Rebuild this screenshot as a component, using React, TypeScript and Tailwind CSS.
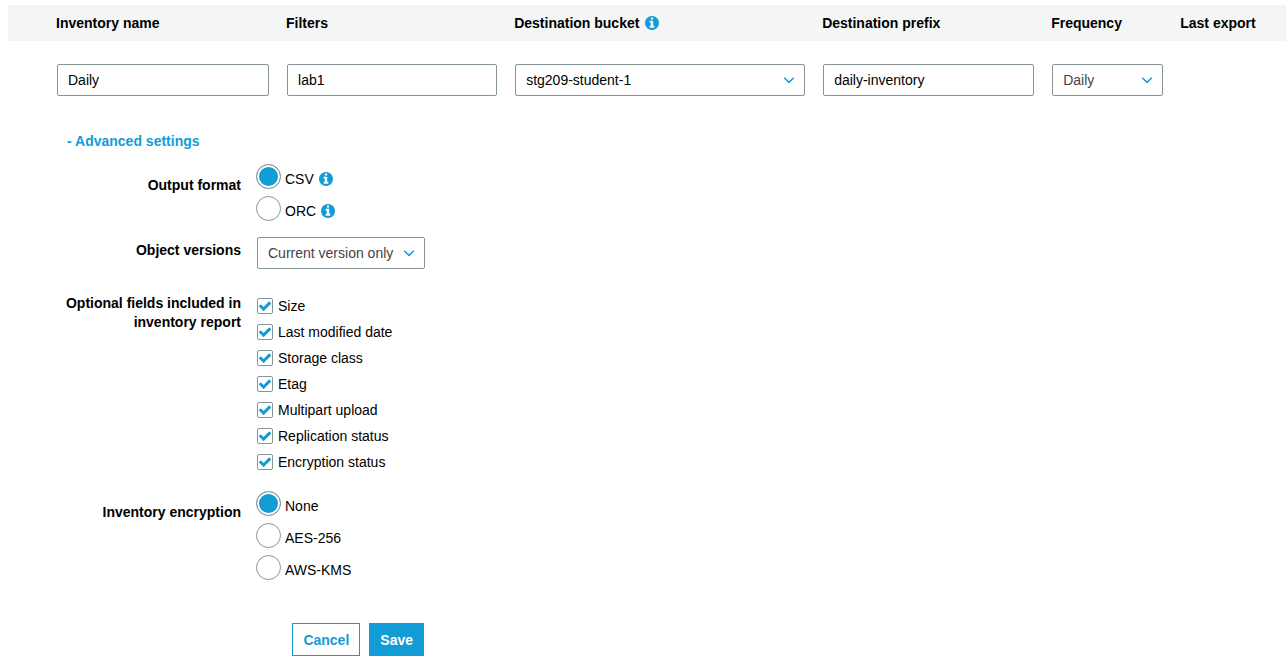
import { useState } from 'react';
import type { ReactNode, SelectHTMLAttributes } from 'react';

function InfoIcon({ label }: { label: string }) {
  return (
    <svg
      role="img"
      aria-label={label}
      viewBox="128 128 1536 1536"
      fill="currentColor"
      className="size-[14px] shrink-0 text-[#129cd6]"
    >
      <path d="M1152 1376v-160q0-14-9-23t-23-9h-96v-512q0-14-9-23t-23-9h-320q-14 0-23 9t-9 23v160q0 14 9 23t23 9h96v320h-96q-14 0-23 9t-9 23v160q0 14 9 23t23 9h448q14 0 23-9t9-23zm-128-896v-160q0-14-9-23t-23-9h-192q-14 0-23 9t-9 23v160q0 14 9 23t23 9h192q14 0 23-9t9-23zm640 416q0 209-103 385.5t-279.5 279.5-385.5 103-385.5-103-279.5-279.5-103-385.5 103-385.5 279.5-279.5 385.5-103 385.5 103 279.5 279.5 103 385.5z" />
    </svg>
  );
}

function TextField({ label, value }: { label: string; value: string }) {
  return (
    <input
      type="text"
      aria-label={label}
      defaultValue={value}
      className="block h-8 w-full rounded-xs border border-[#879596] bg-white px-[10px] text-sm text-black"
    />
  );
}

function SelectField({ children, className = '', ...rest }: SelectHTMLAttributes<HTMLSelectElement>) {
  return (
    <div className="relative">
      <select
        {...rest}
        className={`block h-8 w-full appearance-none rounded-xs border border-[#879596] bg-white pr-7 pl-[10px] text-sm ${className}`}
      >
        {children}
      </select>
      <svg
        viewBox="0 0 12 8"
        className="pointer-events-none absolute top-3 right-[10px] h-2 w-3"
        fill="none"
        stroke="#129cd6"
        strokeWidth="1.5"
        aria-hidden="true"
      >
        <path d="M1.2 1.8 L6 6.4 L10.8 1.8" />
      </svg>
    </div>
  );
}

interface Option {
  label: string;
  info?: string;
}

function RadioGroup({ name, labelId, options }: { name: string; labelId: string; options: Option[] }) {
  return (
    <div role="radiogroup" aria-labelledby={labelId}>
      {options.map((option, index) => (
        <div key={option.label} className="flex h-8 items-start gap-[5px]">
          <label className="flex items-end gap-1 leading-5">
            <input
              type="radio"
              name={name}
              defaultChecked={index === 0}
              className="size-[25px] shrink-0 appearance-none rounded-full border border-[#879596] bg-white checked:bg-[#129cd6] checked:shadow-[inset_0_0_0_2px_white]"
            />
            {option.label}
          </label>
          {option.info && (
            <span className="flex h-[25px] items-end pb-[3px]">
              <InfoIcon label={option.info} />
            </span>
          )}
        </div>
      ))}
    </div>
  );
}

function CheckRow({ label }: { label: string }) {
  return (
    <label className="flex h-[26px] items-center gap-[5px]">
      <span className="relative flex size-4 items-center justify-center">
        <input
          type="checkbox"
          defaultChecked
          className="peer size-4 appearance-none rounded-xs border border-[#879596] bg-white"
        />
        <svg
          viewBox="0 0 1792 1792"
          fill="currentColor"
          aria-hidden="true"
          className="pointer-events-none absolute inset-0 m-auto hidden size-[14px] text-[#129cd6] peer-checked:block"
        >
          <path d="M1671 566q0 40-28 68l-724 724-136 136q-28 28-68 28t-68-28l-136-136-362-362q-28-28-28-68t28-68l136-136q28-28 68-28t68 28l294 295 656-657q28-28 68-28t68 28l136 136q28 28 28 68z" />
        </svg>
      </span>
      {label}
    </label>
  );
}

function FieldRow({ label, children }: { label: ReactNode; children: ReactNode }) {
  return (
    <div className="grid grid-cols-[241px_1fr] gap-x-[15px]">
      <div className="pl-14 text-right leading-[19px] font-bold">{label}</div>
      <div>{children}</div>
    </div>
  );
}

const optionalFields = [
  'Size',
  'Last modified date',
  'Storage class',
  'Etag',
  'Multipart upload',
  'Replication status',
  'Encryption status',
];

export default function App() {
  const [open, setOpen] = useState(true);

  return (
    <form
      className="bg-white pt-[5px] font-['Liberation_Sans',Arial,sans-serif] text-sm text-black"
      onSubmit={(event) => event.preventDefault()}
    >
      <div className="pl-2">
        <table className="w-full table-fixed text-left">
          <colgroup>
            <col className="w-12" />
            <col className="w-[18%]" />
            <col className="w-[17.85%]" />
            <col className="w-[24.1%]" />
            <col className="w-[17.92%]" />
            <col className="w-[10.1%]" />
            <col />
          </colgroup>
          <thead>
            <tr className="h-9 bg-[#f4f6f6]">
              <td />
              <th scope="col">Inventory name</th>
              <th scope="col">Filters</th>
              <th scope="col">
                <span className="flex items-center gap-[6px]">
                  Destination bucket <InfoIcon label="About the destination bucket" />
                </span>
              </th>
              <th scope="col">Destination prefix</th>
              <th scope="col">Frequency</th>
              <th scope="col">Last export</th>
            </tr>
          </thead>
          <tbody>
            <tr>
              <td />
              <td className="pt-[23px] pr-[17px] pl-px">
                <TextField label="Inventory name" value="Daily" />
              </td>
              <td className="pt-[23px] pr-[17px] pl-px">
                <TextField label="Filters" value="lab1" />
              </td>
              <td className="pt-[23px] pr-[17px] pl-px">
                <SelectField aria-label="Destination bucket">
                  <option>stg209-student-1</option>
                </SelectField>
              </td>
              <td className="pt-[23px] pr-[17px] pl-px">
                <TextField label="Destination prefix" value="daily-inventory" />
              </td>
              <td className="pt-[23px] pr-[17px] pl-px">
                <SelectField aria-label="Frequency" className="text-[#444444]">
                  <option>Daily</option>
                </SelectField>
              </td>
              <td />
            </tr>
          </tbody>
        </table>
      </div>

      <button
        type="button"
        aria-expanded={open}
        onClick={() => setOpen(!open)}
        className="mt-[35px] ml-[67px] block leading-5 font-bold text-[#129cd6]"
      >
        {open ? '-' : '+'} Advanced settings
      </button>

      {open && (
        <div className="pt-[13px]">
          <FieldRow label={<div id="output-format" className="pt-3">Output format</div>}>
            <RadioGroup
              name="format"
              labelId="output-format"
              options={[
                { label: 'CSV', info: 'About CSV output' },
                { label: 'ORC', info: 'About ORC output' },
              ]}
            />
          </FieldRow>

          <div className="pt-[9px]">
            <FieldRow
              label={
                <label htmlFor="object-versions" className="block pt-1">
                  Object versions
                </label>
              }
            >
              <div className="w-[169px] pl-px">
                <SelectField id="object-versions" className="text-[#444444]">
                  <option>Current version only</option>
                </SelectField>
              </div>
            </FieldRow>
          </div>

          <div className="pt-6">
            <FieldRow
              label={
                <div id="optional-fields" className="pt-px">
                  Optional fields included in inventory report
                </div>
              }
            >
              <div role="group" aria-labelledby="optional-fields" className="pl-px">
                {optionalFields.map((field) => (
                  <CheckRow key={field} label={field} />
                ))}
              </div>
            </FieldRow>
          </div>

          <div className="pt-4">
            <FieldRow label={<div id="inventory-encryption" className="pt-3">Inventory encryption</div>}>
              <RadioGroup
                name="encryption"
                labelId="inventory-encryption"
                options={[{ label: 'None' }, { label: 'AES-256' }, { label: 'AWS-KMS' }]}
              />
            </FieldRow>
          </div>
        </div>
      )}

      <div className="flex w-[424px] justify-end gap-[9px] pt-9">
        <button type="button" className="h-[33px] border border-[#129cd6] bg-white px-[10px] font-bold text-[#129cd6]">
          Cancel
        </button>
        <button type="submit" className="h-[33px] border border-[#129cd6] bg-[#129cd6] px-[10px] font-bold text-white">
          Save
        </button>
      </div>
    </form>
  );
}
